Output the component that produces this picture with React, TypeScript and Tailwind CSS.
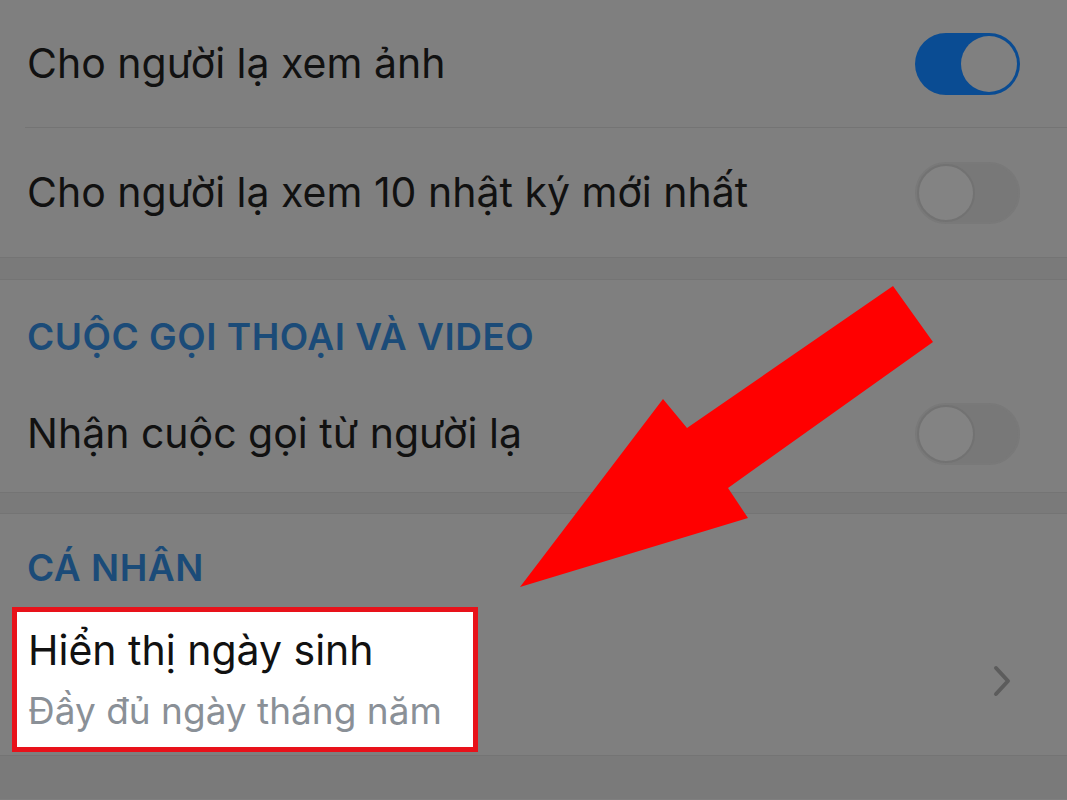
function Toggle({ on }: { on: boolean }) {
  if (on) {
    return (
      <div className="flex h-[62px] w-[105px] items-center justify-end rounded-full bg-[#0a4c93] p-[3px]">
        <div className="h-[56px] w-[56px] rounded-full bg-[#808080]" />
      </div>
    );
  }
  return (
    <div className="flex h-[62px] w-[105px] items-center justify-start rounded-full border-[2px] border-[#797979] bg-[#787878]">
      <div className="h-[58px] w-[58px] rounded-full border-[2px] border-[#727272] bg-[#838383]" />
    </div>
  );
}

function Row({ label, on }: { label: string; on: boolean }) {
  return (
    <div className="flex h-full items-center justify-between pl-[27px] pr-[47px]">
      <span className="text-[41px] leading-none text-[#111]">{label}</span>
      <Toggle on={on} />
    </div>
  );
}

function Header({ title }: { title: string }) {
  return (
    <div className="pl-[27px] text-[37px] font-semibold leading-none tracking-[0.5px] text-[#1b4b78]">
      {title}
    </div>
  );
}

function Gap({ h }: { h: string }) {
  return <div className={`border-y border-[#747474] bg-[#7a7a7a] ${h}`} />;
}

function Arrow() {
  return (
    <svg className="pointer-events-none absolute left-0 top-0" width="1067" height="800" viewBox="0 0 1067 800">
      <polygon
        points="893,286 933,342 728,488 748,518 520,587 663,399 687,428"
        fill="#ff0000"
      />
    </svg>
  );
}

export default function App() {
  return (
    <div
      className="relative h-[800px] w-[1067px] overflow-hidden bg-[#7f7f7f]"
      style={{ fontFamily: "Inter, 'Noto Sans', sans-serif" }}
    >
      <div className="flex flex-col">
        <div className="h-[127px]">
          <Row label="Cho người lạ xem ảnh" on />
        </div>
        <div className="ml-[25px] h-px bg-[#747474]" />
        <div className="h-[129px]">
          <Row label="Cho người lạ xem 10 nhật ký mới nhất" on={false} />
        </div>
        <Gap h="h-[23px]" />
        <div className="flex h-[95px] items-end pb-[20px]">
          <Header title="CUỘC GỌI THOẠI VÀ VIDEO" />
        </div>
        <div className="h-[117px]">
          <Row label="Nhận cuộc gọi từ người lạ" on={false} />
        </div>
        <Gap h="h-[22px]" />
        <div className="flex h-[93px] items-end pb-[21px]">
          <Header title="CÁ NHÂN" />
        </div>
        <div className="flex h-[149px] items-start justify-between border-b border-[#747474] pl-[12px] pr-[55px]">
          <div className="flex h-[145px] w-[466px] flex-col justify-center border-[5px] border-[#e8121a] bg-white pl-[11px]">
            <span className="text-[41px] leading-none text-[#111]">Hiển thị ngày sinh</span>
            <span className="mt-[21px] text-[37px] leading-none text-[#8a9097]">Đầy đủ ngày tháng năm</span>
          </div>
          <svg className="mt-[57px]" width="20" height="34" viewBox="0 0 20 34">
            <path d="M4 4 L16 17 L4 30" fill="none" stroke="#5c5c5c" strokeWidth="4" strokeLinecap="round" strokeLinejoin="round" />
          </svg>
        </div>
        <div className="h-[43px] bg-[#7a7a7a]" />
      </div>
      <Arrow />
    </div>
  );
}
